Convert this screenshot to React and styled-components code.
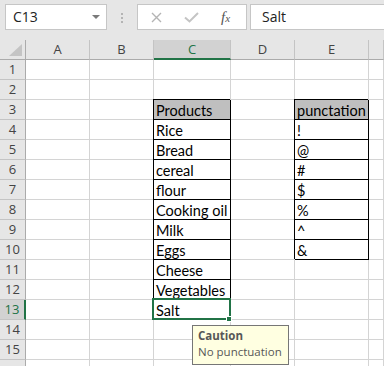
import React from "react";
import styled, { createGlobalStyle } from "styled-components";

const GlobalStyle = createGlobalStyle`
  html, body {
    margin: 0;
    padding: 0;
    background: #ffffff;
    overflow: hidden;
  }
  * {
    box-sizing: border-box;
  }
`;

const products = ["Rice", "Bread", "cereal", "flour", "Cooking oil", "Milk", "Eggs", "Cheese", "Vegetables", "Salt"];
const marks = ["!", "@", "#", "$", "%", "^", "&"];
const columns = ["A", "B", "C", "D", "E", ""];

function Sheet() {
  const rows = [];
  for (let r = 1; r <= 16; r++) {
    const active = r === 13;
    let cText = "";
    let cBoxed = false;
    let eText = "";
    let eBoxed = false;
    if (r === 3) {
      cText = "Products";
      eText = "punctation";
    }
    if (r >= 3 && r <= 13) {
      cBoxed = true;
      if (r > 3) cText = products[r - 4];
    }
    if (r >= 3 && r <= 10) {
      eBoxed = true;
      if (r > 3) eText = marks[r - 4];
    }
    rows.push(
      <React.Fragment key={r}>
        {/* row 16 is only a sliver at the bottom edge, its number is not visible */}
        <RowHead $active={active}>{r < 16 ? r : ""}</RowHead>
        <Cell />
        <Cell />
        <Cell $boxed={cBoxed} $head={r === 3} $active={active}>
          {cText}
          {active && (
            <>
              <Selection>
                <FillHandle />
              </Selection>
              <Tooltip>
                <strong>Caution</strong>
                <span>No punctuation</span>
              </Tooltip>
            </>
          )}
        </Cell>
        <Cell />
        <Cell $boxed={eBoxed} $head={r === 3}>{eText}</Cell>
        <Cell />
      </React.Fragment>
    );
  }

  return (
    <Grid>
      <Corner>
        <svg width="13" height="12" viewBox="0 0 13 12">
          <polygon points="13,0 13,12 0,12" fill="#c4c4c4" />
        </svg>
      </Corner>
      {columns.map((c, i) => (
        <ColHead key={i} $active={c === "C"}>{c}</ColHead>
      ))}
      {rows}
    </Grid>
  );
}

function FormulaBar() {
  return (
    <Toolbar>
      <NameBox>
        C13
        <Caret />
      </NameBox>
      <Dots>
        <i />
        <i />
        <i />
      </Dots>
      <Buttons>
        <svg width="11" height="11" viewBox="0 0 11 11">
          <path d="M1 1 L10 10 M10 1 L1 10" stroke="#b4b4b4" strokeWidth="1.4" />
        </svg>
        <svg width="15" height="11" viewBox="0 0 15 11">
          <path d="M1 5.5 L5.5 9.5 L14 1" stroke="#c4c4c4" strokeWidth="2" fill="none" />
        </svg>
        <Fx>
          f<sub>x</sub>
        </Fx>
      </Buttons>
      <Input>Salt</Input>
    </Toolbar>
  );
}

export default function App() {
  return (
    <>
      <GlobalStyle />
      <Page>
        <FormulaBar />
        <Sheet />
      </Page>
    </>
  );
}

const Page = styled.div`
  width: 384px;
  height: 366px;
  overflow: hidden;
  background: #ffffff;
`;

const Toolbar = styled.div`
  display: flex;
  align-items: flex-start;
  height: 40px;
  padding: 4px 0 0 5px;
  background: #e6e6e6;
  font-family: "Open Sans", "Noto Sans", sans-serif;
`;

const NameBox = styled.div`
  position: relative;
  width: 102px;
  height: 26px;
  padding-left: 7px;
  background: #ffffff;
  border: 1px solid #c6c6c6;
  font-size: 14px;
  line-height: 24px;
  color: #222;
`;

const Caret = styled.span`
  position: absolute;
  right: 6px;
  top: 10px;
  border-left: 4px solid transparent;
  border-right: 4px solid transparent;
  border-top: 4px solid #7a7a7a;
`;

const Dots = styled.div`
  display: flex;
  flex-direction: column;
  gap: 2px;
  margin: 9px 0 0 14px;

  i {
    width: 2px;
    height: 2px;
    background: #b4b4b4;
  }
`;

const Buttons = styled.div`
  display: flex;
  align-items: center;
  width: 110px;
  height: 26px;
  margin-left: 14px;
  padding-left: 13px;
  background: #ffffff;
  border: 1px solid #c6c6c6;

  svg:nth-child(2) {
    margin-left: 22px;
  }
`;

const Fx = styled.span`
  margin-left: 22px;
  font-family: "Liberation Serif", serif;
  font-style: italic;
  font-size: 15px;
  color: #555;
  line-height: 1;

  sub {
    font-size: 11px;
    vertical-align: 0;
  }
`;

const Input = styled.div`
  flex: 1;
  height: 26px;
  margin-left: 3px;
  padding-left: 11px;
  background: #ffffff;
  border: 1px solid #c6c6c6;
  border-right: none;
  font-size: 14px;
  line-height: 24px;
  color: #222;
`;

const Grid = styled.div`
  display: grid;
  grid-template-columns: 26px 64px 64px 77px 64px 74px 1fr;
  grid-auto-rows: 20px;
  background: #e6e6e6;
`;

const Corner = styled.div`
  display: flex;
  align-items: flex-end;
  justify-content: flex-end;
  padding: 0 3px 3px 0;
  border-right: 1px solid #ababab;
  border-bottom: 1px solid #ababab;
`;

const ColHead = styled.div`
  border-right: 1px solid #c4c4c4;
  border-bottom: ${(p) => (p.$active ? "2px solid #217346" : "1px solid #ababab")};
  background: ${(p) => (p.$active ? "#d2d2d2" : "#e6e6e6")};
  color: ${(p) => (p.$active ? "#217346" : "#444")};
  font-family: "Open Sans", "Noto Sans", sans-serif;
  font-size: 13px;
  line-height: 19px;
  text-align: center;
`;

const RowHead = styled.div`
  border-right: ${(p) => (p.$active ? "2px solid #217346" : "1px solid #ababab")};
  border-bottom: 1px solid #c4c4c4;
  background: ${(p) => (p.$active ? "#d2d2d2" : "#e6e6e6")};
  color: ${(p) => (p.$active ? "#217346" : "#444")};
  font-family: "Open Sans", "Noto Sans", sans-serif;
  font-size: 13px;
  line-height: 19px;
  text-align: center;
`;

const Cell = styled.div`
  position: ${(p) => (p.$active ? "relative" : "static")};
  border-right: 1px solid ${(p) => (p.$boxed ? "#000" : "#d4d4d4")};
  border-bottom: 1px solid ${(p) => (p.$boxed ? "#000" : "#d4d4d4")};
  box-shadow: ${(p) => (p.$boxed ? "-1px -1px 0 #000" : "none")};
  background: ${(p) => (p.$head ? "#bfbfbf" : "#ffffff")};
  padding: 1px 2px 0;
  font-family: Lato, "Liberation Sans", sans-serif;
  font-size: 14.5px;
  line-height: 19px;
  color: #000;
  white-space: nowrap;
`;

const Selection = styled.div`
  position: absolute;
  left: -2px;
  top: -2px;
  right: -1px;
  bottom: -1px;
  border: 2px solid #217346;
  z-index: 1;
`;

const FillHandle = styled.div`
  position: absolute;
  right: -3px;
  bottom: -4px;
  width: 6px;
  height: 6px;
  background: #217346;
  border: 1px solid #ffffff;
`;

const Tooltip = styled.div`
  position: absolute;
  left: 38px;
  top: 25px;
  width: 97px;
  height: 40px;
  z-index: 2;
  display: flex;
  flex-direction: column;
  padding: 2px 0 0 5px;
  background: #ffffe1;
  border: 1px solid #767676;
  font-family: "Open Sans", "Noto Sans", sans-serif;
  font-size: 11.5px;
  line-height: 16px;
  color: #575757;

  strong {
    font-weight: 700;
  }
`;
